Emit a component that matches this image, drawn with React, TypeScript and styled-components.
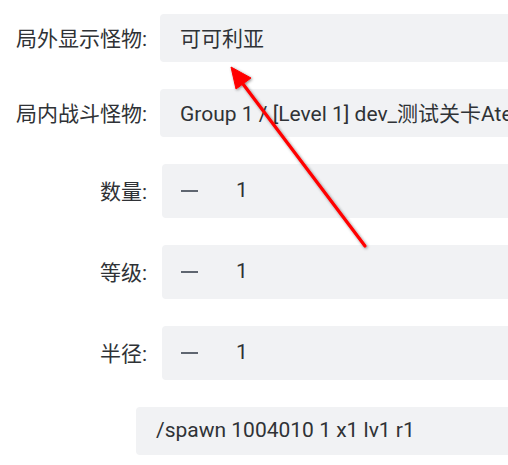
import styled, { createGlobalStyle } from "styled-components";

const GlobalStyle = createGlobalStyle`
  body {
    margin: 0;
    background: #ffffff;
    overflow: hidden;
    font-family: Roboto, "Noto Sans CJK SC", sans-serif;
  }
`;

const Page = styled.div`
  position: relative;
  width: 508px;
  height: 465px;
  overflow: hidden;
  padding-top: 14px;
  box-sizing: border-box;
  display: flex;
  flex-direction: column;
  gap: 27px;
`;

const Row = styled.div`
  display: flex;
  align-items: center;
`;

const Label = styled.div`
  width: 147px;
  flex-shrink: 0;
  text-align: right;
  font-size: 21px;
  color: #2f3236;
  white-space: nowrap;
  padding-bottom: 3px;
`;

const Field = styled.div<{ $offset: number; $tall?: boolean }>`
  margin-left: ${(p) => p.$offset}px;
  width: 420px;
  flex-shrink: 0;
  height: ${(p) => (p.$tall ? 54 : 48)}px;
  background: #f1f2f4;
  border-radius: 4px;
  display: flex;
  align-items: center;
  padding-left: ${(p) => (p.$tall ? 19 : 20)}px;
  padding-bottom: 3px;
  box-sizing: border-box;
  font-size: 21px;
  color: #2f3236;
  white-space: nowrap;
  overflow: hidden;
`;

const Minus = styled.span`
  width: 17px;
  height: 2px;
  background: #5f6670;
  margin-right: 38px;
  margin-top: 3px;
`;

const Arrow = styled.svg`
  position: absolute;
  left: 0;
  top: 0;
  pointer-events: none;
`;

const NumberRow = ({ label }: { label: string }) => (
  <Row>
    <Label>{label}</Label>
    <Field $offset={15} $tall>
      <Minus />
      <span>1</span>
    </Field>
  </Row>
);

export default function App() {
  return (
    <Page>
      <GlobalStyle />
      <Row>
        <Label>局外显示怪物:</Label>
        <Field $offset={13}>可可利亚</Field>
      </Row>
      <Row>
        <Label>局内战斗怪物:</Label>
        <Field $offset={13}>Group 1 / [Level 1] dev_测试关卡Ate</Field>
      </Row>
      <NumberRow label="数量:" />
      <NumberRow label="等级:" />
      <NumberRow label="半径:" />
      <Row>
        <Field $offset={136}>/spawn 1004010 1 x1 lv1 r1</Field>
      </Row>
      <Arrow width="508" height="465" viewBox="0 0 508 465">
        <defs>
          <filter id="shadow" x="-20%" y="-20%" width="140%" height="140%">
            <feDropShadow dx="1" dy="1" stdDeviation="1.5" floodColor="#000" floodOpacity="0.45" />
          </filter>
        </defs>
        <g filter="url(#shadow)" fill="#ff0000" stroke="#ff0000">
          <line x1="365" y1="246" x2="240" y2="80" strokeWidth="3.2" strokeLinecap="round" />
          <polygon points="231,67 251,78 236,89" strokeWidth="1" strokeLinejoin="round" />
        </g>
      </Arrow>
    </Page>
  );
}
